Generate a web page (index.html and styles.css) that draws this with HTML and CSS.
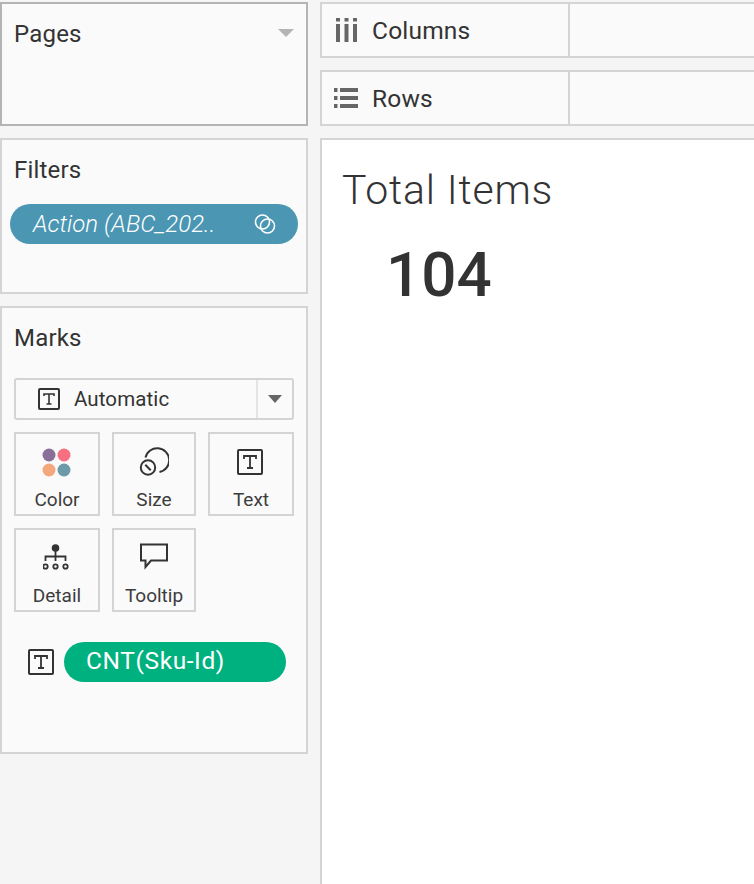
FILE: index.html
```html
<!DOCTYPE html>
<html lang="en">
<head>
  <meta charset="UTF-8">
  <title>Total Items</title>
  <link rel="stylesheet" href="styles.css">
</head>
<body>
  <div class="sidebar">
    <div class="card pages">
      <div class="card-title">Pages</div>
      <span class="pages-caret"></span>
    </div>

    <div class="card filters">
      <div class="card-title">Filters</div>
      <div class="pill pill-filter">
        <span>Action (ABC_202..</span>
        <svg class="link-icon" width="24" height="24" viewBox="0 0 24 24" fill="none" stroke="#fff" stroke-width="1.6">
          <circle cx="9.500" cy="10" r="7"/>
          <circle cx="14.500" cy="14" r="7"/>
        </svg>
      </div>
    </div>

    <div class="card marks">
      <div class="card-title">Marks</div>

      <div class="mark-select">
        <div class="mark-select-value">
          <svg class="t-icon" width="22" height="22" viewBox="0 0 22 22">
            <rect x="1" y="1" width="20" height="20" rx="1" fill="none" stroke="#333" stroke-width="2"/>
            <path d="M6 8V6h10v2M11 6v10M8.500 16h5" fill="none" stroke="#333" stroke-width="1.600"/>
          </svg>
          <span>Automatic</span>
        </div>
        <div class="mark-select-arrow"><span class="caret"></span></div>
      </div>

      <div class="mark-grid">
        <div class="mark-btn">
          <svg width="30" height="30" viewBox="0 0 30 30">
            <circle cx="7" cy="8" r="6.500" fill="#8a7099"/>
            <circle cx="22" cy="8" r="6.500" fill="#f8707f"/>
            <circle cx="7" cy="23" r="6.500" fill="#f4a67c"/>
            <circle cx="22" cy="23" r="6.500" fill="#6d9aa8"/>
          </svg>
          <span>Color</span>
        </div>
        <div class="mark-btn">
          <svg width="30" height="30" viewBox="0 0 30 30" fill="none" stroke="#333" stroke-width="2">
            <path d="M6.500 10.500A12 12 0 1 1 20.500 25"/>
            <circle cx="9" cy="20.500" r="7.200"/>
            <path d="M6.300 17.800l5.400 5.400"/>
          </svg>
          <span>Size</span>
        </div>
        <div class="mark-btn">
          <svg class="icon-nudge" width="26" height="26" viewBox="0 0 26 26">
            <rect x="1" y="1" width="24" height="24" rx="1" fill="none" stroke="#333" stroke-width="2"/>
            <path d="M7 10V7h12v3M13 7v12M10 19h6" fill="none" stroke="#333" stroke-width="1.800"/>
          </svg>
          <span>Text</span>
        </div>
        <div class="mark-btn">
          <svg class="icon-nudge" width="26" height="30" viewBox="0 0 26 30" fill="none" stroke="#333" stroke-width="1.800">
            <circle cx="12.500" cy="5" r="3.800" fill="#333" stroke="none"/>
            <path d="M12.500 8v10M2.500 18v-4.500h20V18"/>
            <circle cx="2.500" cy="23.500" r="2.200"/>
            <circle cx="12.500" cy="23.500" r="2.200"/>
            <circle cx="22.500" cy="23.500" r="2.200"/>
          </svg>
          <span>Detail</span>
        </div>
        <div class="mark-btn">
          <svg width="30" height="30" viewBox="0 0 30 30">
            <path d="M2 1.500h26v16H12l-5.500 6.500v-6.500H2z" fill="none" stroke="#333" stroke-width="2"/>
          </svg>
          <span>Tooltip</span>
        </div>
      </div>

      <div class="mark-field">
        <svg class="t-icon" width="26" height="26" viewBox="0 0 26 26">
          <rect x="1" y="1" width="24" height="24" rx="1" fill="none" stroke="#333" stroke-width="2"/>
          <path d="M7 10V7h12v3M13 7v12M10 19h6" fill="none" stroke="#333" stroke-width="1.800"/>
        </svg>
        <div class="pill pill-measure">CNT(Sku-Id)</div>
      </div>
    </div>
  </div>

  <div class="main">
    <div class="shelf">
      <div class="shelf-label">
        <svg class="shelf-icon icon-columns" width="21" height="24" viewBox="0 0 21 24" fill="#666">
          <rect x="0" y="0" width="4" height="3.500"/>
          <rect x="8.500" y="0" width="4" height="3.500"/>
          <rect x="17" y="0" width="4" height="3.500"/>
          <rect x="0" y="6" width="4" height="18"/>
          <rect x="8.500" y="6" width="4" height="18"/>
          <rect x="17" y="6" width="4" height="18"/>
        </svg>
        <span>Columns</span>
      </div>
    </div>
    <div class="shelf">
      <div class="shelf-label">
        <svg class="shelf-icon icon-rows" width="24" height="20" viewBox="0 0 24 20" fill="#666">
          <rect x="0" y="0" width="3.500" height="4"/>
          <rect x="0" y="8" width="3.500" height="4"/>
          <rect x="0" y="16" width="3.500" height="4"/>
          <rect x="6" y="0" width="18" height="4"/>
          <rect x="6" y="8" width="18" height="4"/>
          <rect x="6" y="16" width="18" height="4"/>
        </svg>
        <span>Rows</span>
      </div>
    </div>
    <div class="view">
      <h1 class="view-title">Total Items</h1>
      <div class="view-value">104</div>
    </div>
  </div>
</body>
</html>
```

FILE: styles.css
```css
html, body {
  height: 100%;
}

body {
  background-color: #f5f5f5;
  color: #333;
  font-family: 'Roboto', sans-serif;
  margin: 0;
  padding-top: 2px;
  display: flex;
  gap: 12px;
  box-sizing: border-box;
  overflow: hidden;
}

svg {
  display: block;
  flex: none;
}

.sidebar {
  width: 308px;
  flex: none;
  display: flex;
  flex-direction: column;
  gap: 12px;
}

.card {
  background: #fafafa;
  border: 2px solid #d4d4d4;
  box-sizing: border-box;
  padding: 0 12px;
}

.card-title {
  font-size: 24px;
  line-height: 30px;
  letter-spacing: 0.2px;
}

.pages {
  height: 124px;
  border-color: #b4b4b4;
  padding-top: 15px;
  display: flex;
  justify-content: space-between;
}

.pages-caret {
  border-left: 8px solid transparent;
  border-right: 8px solid transparent;
  border-top: 8px solid #b4b4b4;
  margin-top: 10px;
  height: 0;
}

.filters {
  height: 156px;
  padding-top: 15px;
}

.pill {
  color: #fff;
  border-radius: 20px;
  height: 40px;
  display: flex;
  align-items: center;
  box-sizing: border-box;
}

.pill-filter {
  background: #4a96b3;
  margin: 19px -4px 0 -4px;
  padding: 0 21px 0 23px;
  font-size: 24px;
  font-style: italic;
  font-weight: 300;
  justify-content: space-between;
}

.marks {
  height: 448px;
  padding-top: 15px;
}

.mark-select {
  margin-top: 25px;
  height: 42px;
  border: 2px solid #d4d4d4;
  border-radius: 3px;
  box-sizing: border-box;
  display: flex;
}

.mark-select-value {
  flex: 1;
  display: flex;
  align-items: center;
  gap: 14px;
  padding-left: 22px;
  font-size: 20.500px;
  letter-spacing: 0.1px;
}

.mark-select-arrow {
  width: 34px;
  border-left: 2px solid #e4e4e4;
  display: flex;
  align-items: center;
  justify-content: center;
}

.caret {
  border-left: 7px solid transparent;
  border-right: 7px solid transparent;
  border-top: 8px solid #666;
}

.mark-grid {
  margin-top: 12px;
  display: grid;
  grid-template-columns: 86px 84px 86px;
  grid-auto-rows: 84px;
  gap: 12px;
}

.mark-btn {
  border: 2px solid #d4d4d4;
  box-sizing: border-box;
  display: flex;
  flex-direction: column;
  align-items: center;
  font-size: 19px;
  line-height: 24px;
  color: #3c3c3c;
}

.mark-btn svg {
  height: 30px;
  margin-top: 13px;
}

.mark-btn .icon-nudge {
  margin-right: 3px;
}

.mark-btn span {
  margin-top: auto;
  margin-bottom: 2px;
}

.mark-field {
  margin-top: 30px;
  margin-left: 14px;
  margin-right: 8px;
  display: flex;
  align-items: center;
  gap: 10px;
}

.pill-measure {
  flex: 1;
  background: #00b180;
  font-size: 24.500px;
  letter-spacing: 0.600px;
  padding: 0 0 3px 22px;
}

.main {
  width: 440px;
  flex: none;
  display: flex;
  flex-direction: column;
  gap: 12px;
}

.shelf {
  height: 56px;
  background: #fafafa;
  border: 2px solid #d4d4d4;
  box-sizing: border-box;
}

.shelf-label {
  width: 246px;
  height: 100%;
  border-right: 2px solid #d4d4d4;
  display: flex;
  align-items: center;
  font-size: 24.500px;
  letter-spacing: 0.2px;
}

.shelf-icon {
  margin-right: 15px;
}

.icon-columns {
  margin-left: 14px;
}

.icon-rows {
  margin-left: 12px;
  margin-right: 14px;
}

.view {
  flex: 1;
  background: #fff;
  border: 2px solid #d4d4d4;
  padding: 24px 0 0 20px;
  margin-bottom: -4px;
}

.view-title {
  margin: 0;
  font-size: 41px;
  line-height: 52px;
  font-weight: 300;
  letter-spacing: 0.800px;
}

.view-value {
  margin: 24px 0 0 44px;
  font-size: 62px;
  line-height: 70px;
  font-weight: 500;
}
```
